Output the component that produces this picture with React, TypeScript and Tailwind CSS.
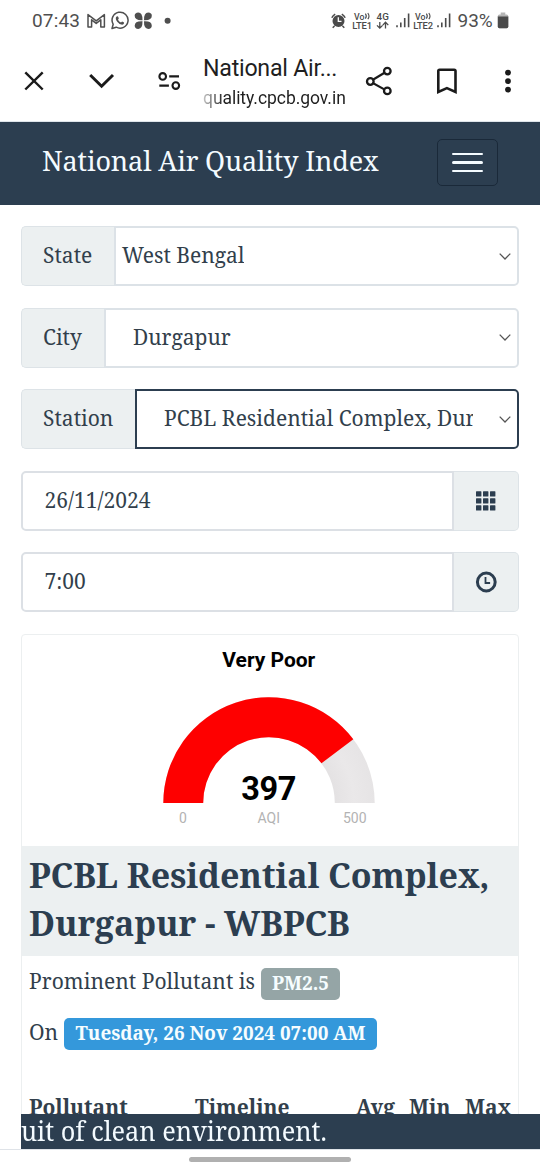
import React from 'react';

const SERIF = "font-['Noto_Serif','DejaVu_Serif_Condensed','DejaVu_Serif',serif] [font-stretch:condensed]";
const SANS = 'font-[Roboto,sans-serif] [font-stretch:normal]';

/* ---------- Phone status bar ---------- */

const Signal = () => (
  <svg width="14" height="15" viewBox="0 0 14 15" stroke="#4a4a4a" strokeWidth="1.6">
    <path d="M1 12.2V14.2M4.8 9.5V14.2M8.7 5V14.2M12.6 0.5V14.2" />
  </svg>
);

const VoLte = ({ sim }: { sim: number }) => (
  <svg width="21" height="18" viewBox="0 0 21 18" fill="#4a4a4a" fontFamily="Roboto, sans-serif" fontWeight="500">
    <text x="2" y="7.5" fontSize="8.8">Vo</text>
    <path d="M13.4 1.6q1.8 2.5 0 5M15.8 1q2.4 3.1 0 6.2" fill="none" stroke="#4a4a4a" strokeWidth="1.1" />
    <text x="0.2" y="16.5" fontSize="9.4" textLength="19.8">{`LTE${sim}`}</text>
  </svg>
);

const StatusBar = () => (
  <div className={`flex h-[41px] items-center pl-8 text-[#4f4f4f] ${SANS}`}>
    <span className="w-[54px] text-[19px] leading-6 tracking-[0.15px]">07:43</span>
    <svg width="90" height="20" viewBox="86 11 90 20">
      <path d="M88 27V14.6l8.2 6.3 8.2-6.3V27h-3.6v-7.2l-4.6 3.6-4.6-3.6V27z" fill="none" stroke="#4f4f4f" strokeWidth="1.5" strokeLinejoin="round" />
      <path d="M112 28.5l1.2-4.2a8 8 0 1 1 3 2.9z" fill="none" stroke="#4f4f4f" strokeWidth="1.5" strokeLinejoin="round" />
      <path d="M116.3 16.8q1.4-1.4 2 .3l.5 1.4-.8 1.2q1 2 3 2.9l1.1-1 2 1q.2 1.8-1.8 2.1-2.8 0-5.1-3-2.3-3-.9-4.9z" fill="#4f4f4f" />
      <g fill="#4f4f4f">
        <path d="M142.5 20.2q-7.8.4-7.8-4.4 0-3 3.6-3.2 4.4.2 4.2 7.6z" />
        <path d="M144 20.2q7.8.4 7.8-4.4 0-3-3.6-3.2-4.4.2-4.2 7.6z" />
        <path d="M142.5 21.3q-7.8-.4-7.8 4.4 0 3 3.6 3.2 4.4-.2 4.2-7.6z" />
        <path d="M144 21.3q7.8-.4 7.8 4.4 0 3-3.6 3.2-4.4-.2-4.2-7.6z" />
        <circle cx="167.6" cy="20.8" r="3" />
      </g>
    </svg>
    <svg className="ml-[154px]" width="18" height="18" viewBox="330 12 18 18">
      <circle cx="338.5" cy="21" r="6" fill="#4a4a4a" />
      <path d="M331.8 17.8a8 8 0 0 1 3.4-3.6M341.8 14.2a8 8 0 0 1 3.4 3.6M334.5 26l-1.8 1.8M342.5 26l1.8 1.8" fill="none" stroke="#4a4a4a" strokeWidth="1.5" />
      <path d="M338.3 17.2v4.1h3.2" fill="none" stroke="#fff" strokeWidth="1.3" />
    </svg>
    <div className="ml-[3.5px] flex items-center">
      <VoLte sim={1} />
      <svg className="ml-[3px]" width="15" height="18" viewBox="0 0 15 18" fill="#4a4a4a">
        <text x="0.5" y="7.8" fontSize="9.8" fontWeight="500" textLength="12.5" fontFamily="Roboto, sans-serif">4G</text>
        <path d="M3.8 10v6M1 13.4l2.8 2.8 2.8-2.8M9.5 16.5v-6M6.8 13.1l2.7-2.8 2.8 2.8" fill="none" stroke="#4a4a4a" strokeWidth="1.3" />
      </svg>
      <span className="ml-[5px]"><Signal /></span>
      <span className="ml-[3px]"><VoLte sim={2} /></span>
      <span className="ml-[3px]"><Signal /></span>
    </div>
    <span className="ml-[7px] w-[39px] text-[19px] leading-6">93%</span>
    <svg width="13" height="17" viewBox="0 0 13 17">
      <path d="M3.7 0.5h4.6v3H3.7z" fill="#b5b5b5" />
      <rect x="0.8" y="2.6" width="10.5" height="13.6" rx="1.6" fill="#b5b5b5" />
      <path d="M0.8 4.6h10.5v10q0 1.6-1.6 1.6h-7.3q-1.6 0-1.6-1.6z" fill="#4a4a4a" />
    </svg>
  </div>
);

/* ---------- Browser toolbar ---------- */

const BrowserBar = () => (
  <div className={`flex h-[81px] items-center border-b border-[#dfe5ea] text-[#1f1f1f] ${SANS}`}>
    <svg className="shrink-0" width="203" height="80" viewBox="0 41 203 80" fill="none" stroke="#1b1b1b">
      <path d="M25.3 72.3l17.4 17.2M42.7 72.3L25.3 89.5" strokeWidth="2.4" />
      <path d="M90.2 75l11.4 11.2L113 75" strokeWidth="3" />
      <circle cx="162.7" cy="76.4" r="3.3" strokeWidth="2.1" />
      <circle cx="175.8" cy="85.6" r="3.3" strokeWidth="2.1" />
      <path d="M169.2 76.4h9.8M159.3 85.6h9.6" strokeWidth="2.1" />
    </svg>
    <div className="w-[146px] shrink-0 pt-[4px]">
      <div className="whitespace-nowrap text-[23.2px] leading-[30px] tracking-[-0.25px]">National Air...</div>
      <div className="whitespace-nowrap bg-gradient-to-r from-[#1f1f1f]/25 to-[#1f1f1f] to-[14%] bg-clip-text text-[17.5px] leading-[30px] tracking-[-0.05px] text-transparent">
        quality.cpcb.gov.in
      </div>
    </div>
    <svg className="shrink-0" width="191" height="80" viewBox="349 41 191 80" fill="none" stroke="#1b1b1b">
      <path d="M387 71.3l-17 10.2 17 9.4" strokeWidth="2.2" />
      <g fill="#fff" strokeWidth="2.3">
        <circle cx="370.3" cy="81.5" r="3.3" />
        <circle cx="387.3" cy="71.1" r="3.3" />
        <circle cx="387.3" cy="90.9" r="3.3" />
      </g>
      <path d="M438.3 71a1.3 1.3 0 0 1 1.3-1.3h14.6a1.3 1.3 0 0 1 1.3 1.3v20.9l-8.6-3.8-8.6 3.8z" strokeWidth="2.6" />
      <g fill="#1b1b1b" stroke="none">
        <circle cx="508" cy="72.6" r="2.9" />
        <circle cx="508" cy="81.1" r="2.9" />
        <circle cx="508" cy="89.6" r="2.9" />
      </g>
    </svg>
  </div>
);

/* ---------- Site header ---------- */

const Navbar = () => (
  <div className="flex h-[83px] items-center justify-between bg-[#2c3e50] pl-[42px] pr-[42px]">
    <span className="whitespace-nowrap pb-[6px] text-[27px] leading-9 tracking-[-0.14px] text-[#f4fbff]">National Air Quality Index</span>
    <button className="mt-[-2px] flex h-[47px] w-[61px] flex-col items-center justify-center gap-[6px] rounded-[5px] border border-[#1a2939]">
      <span className="h-[2.5px] w-[31px] rounded-sm bg-[#f4fbff]" />
      <span className="h-[2.5px] w-[31px] rounded-sm bg-[#f4fbff]" />
      <span className="h-[2.5px] w-[31px] rounded-sm bg-[#f4fbff]" />
    </button>
  </div>
);

/* ---------- Form ---------- */

interface SelectRowProps {
  label: string;
  value: string;
  labelClass: string;
  valueClass: string;
  focused?: boolean;
}

const SelectRow = ({ label, value, labelClass, valueClass, focused }: SelectRowProps) => (
  <div className="flex h-[60px] text-[21px] leading-7">
    <div className={`flex shrink-0 items-center rounded-l-[5px] border border-r-0 border-[#dde3e7] bg-[#ecf0f1] pb-[2px] pl-[21px] ${labelClass}`}>
      {label}
    </div>
    <div className={`flex min-w-0 flex-1 items-center justify-between rounded-r-[5px] border-2 pr-[5px] ${focused ? 'border-[#2c3e50]' : 'border-[#dce2e7]'}`}>
      <span className={`overflow-hidden whitespace-nowrap pb-[2px] ${valueClass}`}>{value}</span>
      <svg className="shrink-0" width="14" height="9" viewBox="0 0 14 9" fill="none" stroke="#555" strokeWidth="1.3">
        <path d="M1.7 1.6L7 7l5.3-5.4" />
      </svg>
    </div>
  </div>
);

const InputRow = ({ value, children }: { value: string; children: React.ReactNode }) => (
  <div className="flex h-[60px] text-[21px] leading-7">
    <div className="flex flex-1 items-center rounded-l-[5px] border-2 border-[#dce0e5] pb-[2px] pl-[21.5px]">{value}</div>
    <div className="flex w-[65px] items-center justify-center rounded-r-[5px] border border-l-0 border-[#dde3e7] bg-[#ecf0f1]">{children}</div>
  </div>
);

const Filters = () => (
  <div className="flex flex-col gap-[21.5px]">
    <SelectRow label="State" value="West Bengal" labelClass="w-[93px]" valueClass="pl-[6px]" />
    <SelectRow label="City" value="Durgapur" labelClass="w-[83px]" valueClass="pl-[27px]" />
    <SelectRow label="Station" value="PCBL Residential Complex, Durgapur - WBPCB" labelClass="w-[114px]" valueClass="ml-[27px] w-[309px]" focused />
    <InputRow value="26/11/2024">
      <svg className="mr-px" width="20" height="20" viewBox="0 0 20 20" fill="#2c3e50">
        {[0, 7, 14].map(y => [0, 7, 14].map(x => <rect key={`${x}-${y}`} x={x} y={y + 0.2} width="5.4" height="5.4" rx="0.5" />))}
      </svg>
    </InputRow>
    <InputRow value="7:00">
      <svg width="22" height="22" viewBox="0 0 22 22" fill="none" stroke="#2c3e50">
        <circle cx="11.3" cy="11" r="8.9" strokeWidth="3" />
        <path d="M10.5 6v6h4.6" strokeWidth="1.8" />
      </svg>
    </InputRow>
  </div>
);

/* ---------- AQI gauge ---------- */

const AQI = 397;
const AQI_MAX = 500;
const CX = 247;
const CY = 168;

const ring = (from: number, to: number) => {
  const outer = 105.7;
  const inner = 65.8;
  const at = (r: number, t: number) => {
    const a = Math.PI * (1 - t);
    return `${CX + r * Math.cos(a)} ${CY - r * Math.sin(a)}`;
  };
  return `M${at(outer, from)}A${outer} ${outer} 0 0 1 ${at(outer, to)}L${at(inner, to)}A${inner} ${inner} 0 0 0 ${at(inner, from)}Z`;
};

const Gauge = () => (
  <svg width="496" height="211" viewBox="0 0 496 211" textAnchor="middle" className={`block fill-black ${SANS}`}>
    <defs>
      <radialGradient id="track" gradientUnits="userSpaceOnUse" cx={CX} cy={CY} r="106">
        <stop offset="0.62" stopColor="#e4e2e3" />
        <stop offset="0.8" stopColor="#eae8e9" />
        <stop offset="1" stopColor="#e6e4e5" />
      </radialGradient>
    </defs>
    <text x="246.8" y="32" fontSize="21" fontWeight="700" textLength="93">Very Poor</text>
    <path d={ring(0, 1)} fill="url(#track)" />
    <path d={ring(0, AQI / AQI_MAX)} fill="#fe0000" />
    <text x="246.8" y="164.5" fontSize="32.5" fontWeight="700" textLength="55">{AQI}</text>
    <g fontSize="14" fill="#b3b3b3">
      <text x="161" y="187.5">0</text>
      <text x="246.8" y="187.5" textLength="22.5">AQI</text>
      <text x="332.8" y="187.5" textLength="23.5">{AQI_MAX}</text>
    </g>
  </svg>
);

/* ---------- Station card ---------- */

const StationCard = () => (
  <div className="mt-[22px] h-[600px] rounded-t-[4px] border border-[#eceff0]">
    <Gauge />
    <h1 className="h-[110px] whitespace-nowrap bg-[#ecf0f1] pl-[7px] pt-[5px] text-[34px] font-bold leading-[48px] tracking-[-0.14px] text-[#2c3e50]">
      <span className="block">PCBL Residential Complex,</span>
      <span className="block">Durgapur - WBPCB</span>
    </h1>
    <div className="mt-3 flex h-8 whitespace-nowrap pl-[7px] text-[21px]">
      <span className="w-[232px] leading-[27px] tracking-[0.03px]">Prominent Pollutant is</span>
      <span className="flex h-8 w-[79px] justify-center rounded-[5px] bg-[#95a5a6] text-[18.9px] font-bold leading-[30px] text-[#f6fdff]">PM2.5</span>
    </div>
    <div className="mt-[18px] flex h-8 whitespace-nowrap pl-[7px] text-[21px]">
      <span className="w-[35px] leading-[28px]">On</span>
      <span className="flex h-8 w-[313px] justify-center rounded-[5px] bg-[#3498db] text-[18.9px] font-bold leading-[30px] text-[#f6fdff]">Tuesday, 26 Nov 2024 07:00 AM</span>
    </div>
    <div className="mt-[42px] grid grid-cols-[166px_161px_53px_56px_50px] whitespace-nowrap pl-[7px] text-[21px] font-bold leading-[30px]">
      <span>Pollutant</span>
      <span>Timeline</span>
      <span>Avg</span>
      <span>Min</span>
      <span>Max</span>
    </div>
  </div>
);

export default function App() {
  return (
    <div className={`relative h-[1170px] w-[540px] overflow-hidden bg-white text-[#323f4c] ${SERIF}`}>
      <StatusBar />
      <BrowserBar />
      <Navbar />
      <main className="px-[21px] pt-[21px]">
        <Filters />
        <StationCard />
      </main>
      {/* fixed ticker and gesture bar overlay the scrolled page */}
      <div className="absolute inset-x-0 bottom-0">
        <div className="ml-[21px] h-[35px] overflow-hidden whitespace-nowrap bg-[#2c3e50] text-[27px] leading-[34px] text-[#f4fbff]">
          <span className="inline-block origin-left scale-x-[0.938]">uit of clean environment.</span>
        </div>
        <div className="flex h-[21px] justify-center border-t border-[#dfe3e8] bg-white pt-[7px]">
          <div className="h-[5px] w-[162px] rounded-full bg-[#b0b0b0]" />
        </div>
      </div>
    </div>
  );
}
